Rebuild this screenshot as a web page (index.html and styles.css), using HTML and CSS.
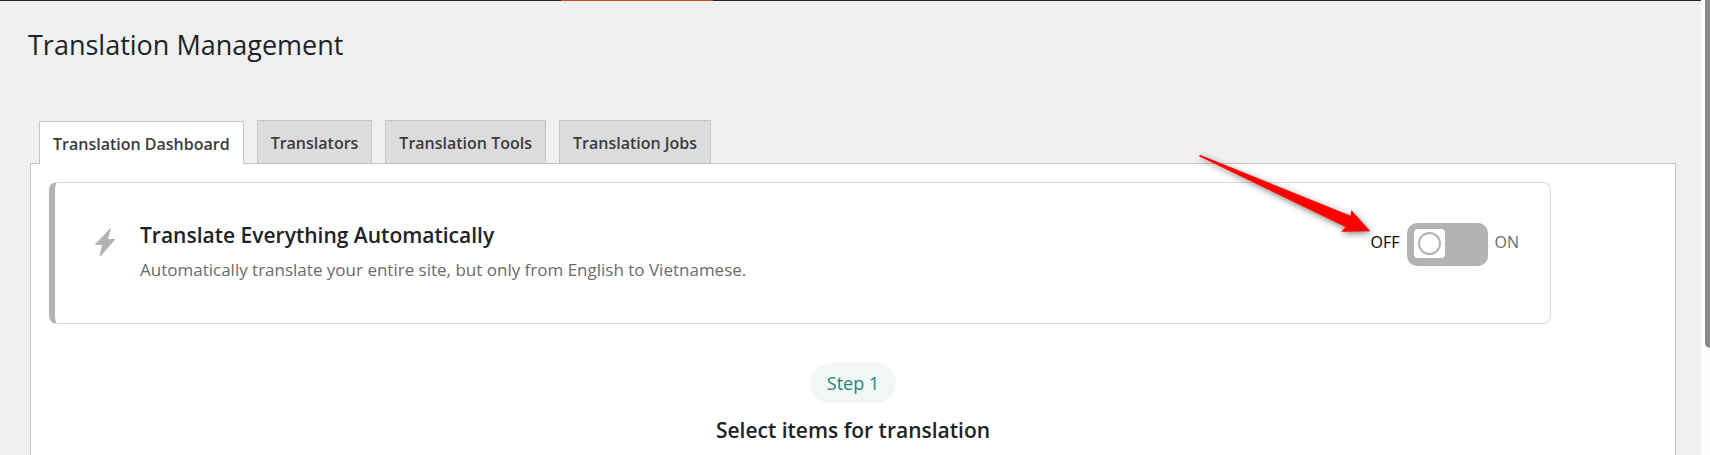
FILE: index.html
```html
<!DOCTYPE html>
<html lang="en">
<head>
  <meta charset="UTF-8">
  <meta name="viewport" content="width=device-width, initial-scale=1.0">
  <title>Translation Management</title>
  <link rel="stylesheet" href="styles.css">
</head>
<body>
  <div class="page">
    <div class="admin-bar"><div class="admin-bar-active"></div></div>

    <main class="wrap">
      <h1>Translation Management</h1>

      <!-- Tabs -->
      <nav class="tabs">
        <a href="#dashboard" class="tab tab-active">Translation Dashboard</a>
        <a href="#translators" class="tab">Translators</a>
        <a href="#tools" class="tab">Translation Tools</a>
        <a href="#jobs" class="tab">Translation Jobs</a>
      </nav>

      <div class="panel">
        <section class="auto-card">
          <svg class="bolt" viewBox="0 0 20 28" aria-hidden="true">
            <path d="M15.500 0 L0.300 16 Q-.3 17 .8 17 L7 17 L4.600 27.300 Q5.200 28.400 6.200 27.500 L20 11.800 Q20.200 11 19.300 10.900 L13 10.900 L16 .6 Q16 0 15.500 0Z"/>
          </svg>
          <div class="auto-text">
            <h2>Translate Everything Automatically</h2>
            <p>Automatically translate your entire site, but only from English to Vietnamese.</p>
          </div>
          <div class="switch-group">
            <label for="auto-switch" class="switch-off">OFF</label>
            <span class="switch">
              <input type="checkbox" role="switch" id="auto-switch" aria-label="Translate Everything Automatically">
              <span class="knob"></span>
            </span>
            <label for="auto-switch" class="switch-on">ON</label>
            <svg class="arrow" viewBox="0 0 172 78" aria-hidden="true">
              <path d="M0 .5 L1.500 0 L151.700 60.700 L152.300 55 L171.300 76.300 L142.300 76.700 L146.700 72 L.5 1.500Z"/>
            </svg>
          </div>
        </section>

        <section class="step">
          <span class="step-badge">Step 1</span>
          <h2>Select items for translation</h2>
        </section>
      </div>
    </main>
  </div>

  <div class="scrollbar"><div class="scrollbar-thumb"></div></div>
</body>
</html>
```
FILE: styles.css
```css
* {
  box-sizing: border-box;
}

body {
  display: flex;
  height: 100vh;
  margin: 0;
  overflow: hidden;
  background-color: #f0f0f0;
  color: #1d2327;
  font-family: "Open Sans", "Noto Sans", sans-serif;
}

h1,
h2,
p {
  margin: 0;
}

.page {
  flex: 1;
  display: flex;
  flex-direction: column;
}

.admin-bar {
  height: 1px;
  padding-left: 33%;
  background-color: #1d2327;
}

.admin-bar-active {
  width: 152px;
  height: 1px;
  background-color: #ca4a1f;
}

.wrap {
  flex: 1;
  display: flex;
  flex-direction: column;
  padding: 24px 25px 0 28px;
}

h1 {
  font-size: 27px;
  font-weight: 400;
  line-height: 40px;
}

.tabs {
  display: flex;
  align-items: flex-end;
  gap: 13px;
  margin-top: 55px;
  padding-left: 11px;
}

.tab {
  height: 43px;
  padding: 0 13px;
  border: 1px solid #c3c4c7;
  border-bottom: none;
  background-color: #dcdcde;
  color: #3c3c3c;
  font-size: 16px;
  font-weight: 600;
  line-height: 44px;
  text-decoration: none;
}

/* Sits on the panel border so the tab looks open */
.tab-active {
  z-index: 1;
  margin-bottom: -1px;
  background-color: #fff;
}

.panel {
  flex: 1;
  margin-left: 2px;
  padding: 18px;
  border: 1px solid #c3c4c7;
  border-bottom: none;
  background-color: #fff;
}

.auto-card {
  display: flex;
  align-items: flex-start;
  max-width: 1502px;
  height: 142px;
  padding: 35px 31px 0 40px;
  border: 1px solid #dadada;
  border-left: 6px solid #b3b3b3;
  border-radius: 8px;
}

.bolt {
  width: 20px;
  height: 28px;
  margin-top: 10px;
  fill: #b3b3b3;
}

.auto-text {
  flex: 1;
  margin-left: 25px;
}

h2 {
  font-size: 21px;
  font-weight: 600;
  line-height: 34px;
}

.auto-text p {
  color: #6b6b6b;
  font-size: 17px;
  line-height: 36px;
}

.switch-group {
  position: relative;
  display: flex;
  align-items: flex-start;
  gap: 7px;
  margin-top: 5px;
  font-size: 16px;
  line-height: 38px;
}

.switch-off {
  color: #000;
}

.switch-on {
  color: #6b6b6b;
}

.switch {
  position: relative;
  display: flex;
  width: 81px;
  height: 43px;
}

.switch input {
  appearance: none;
  width: 100%;
  margin: 0;
  border-radius: 10px;
  background-color: #b3b3b3;
  cursor: pointer;
}

.knob {
  position: absolute;
  top: 6px;
  left: 7px;
  display: grid;
  place-items: center;
  width: 31px;
  height: 29px;
  border-radius: 4px;
  background-color: #fff;
  pointer-events: none;
}

.knob::before {
  content: "";
  width: 19px;
  height: 19px;
  border: 2px solid #b3b3b3;
  border-radius: 50%;
}

.switch input:checked + .knob {
  left: 43px;
}

.arrow {
  position: absolute;
  right: 100%;
  bottom: 33px;
  width: 172px;
  height: 78px;
  overflow: visible;
  fill: #f00;
  filter: drop-shadow(1px 2px 3px rgba(0, 0, 0, 0.5));
  pointer-events: none;
}

.step {
  display: flex;
  flex-direction: column;
  align-items: center;
  margin-top: 39px;
}

.step-badge {
  padding: 0 17px;
  border-radius: 20px;
  background-color: #f2f7f6;
  color: #1f8574;
  font-size: 18px;
  line-height: 40px;
}

.step h2 {
  margin-top: 10px;
}

.scrollbar {
  width: 9px;
  padding-left: 4px;
  background-color: #fcfcfc;
}

.scrollbar-thumb {
  height: 348px;
  border-radius: 0 0 0 5px;
  background-color: #8a8a8a;
}
```
